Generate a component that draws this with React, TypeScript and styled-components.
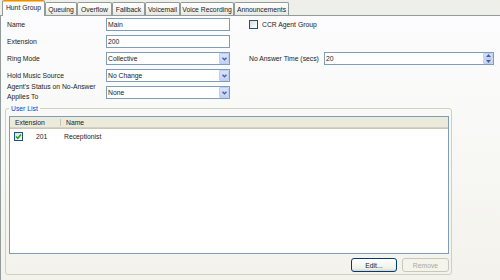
import React from "react";
import styled, { createGlobalStyle, css } from "styled-components";

const GlobalStyle = createGlobalStyle`
  html, body {
    margin: 0;
    padding: 0;
    background: #efefea;
  }
  body {
    font-family: "Liberation Sans", Arial, sans-serif;
    font-size: 6.8px;
    color: #1a1a1a;
  }
  * {
    box-sizing: border-box;
  }
`;

const tabs = [
  { label: "Hunt Group", width: 43 },
  { label: "Queuing", width: 32 },
  { label: "Overflow", width: 35 },
  { label: "Fallback", width: 33 },
  { label: "Voicemail", width: 35 },
  { label: "Voice Recording", width: 54 },
  { label: "Announcements", width: 55 },
];

const Chevron = () => (
  <svg width="5" height="4" viewBox="0 0 5 4">
    <polyline points="0.5,0.8 2.5,2.8 4.5,0.8" fill="none" stroke="#4d6185" strokeWidth="1.3" />
  </svg>
);

const App = () => {
  return (
    <>
      <GlobalStyle />
      <StyledWindow>
        <StyledTabStrip>
          {tabs.map((t, i) => (
            <StyledTab key={t.label} $active={i === 0} $width={t.width}>
              {t.label}
            </StyledTab>
          ))}
        </StyledTabStrip>
        <StyledPanel>
          <StyledForm>
            <StyledLabel>Name</StyledLabel>
            <StyledInput>Main</StyledInput>
            <span />
            <StyledCheckRow>
              <StyledCheckbox />
              <span>CCR Agent Group</span>
            </StyledCheckRow>

            <StyledLabel>Extension</StyledLabel>
            <StyledInput>200</StyledInput>
            <span />
            <span />
            <span />

            <StyledLabel>Ring Mode</StyledLabel>
            <StyledSelect>
              <span>Collective</span>
              <StyledDropButton>
                <Chevron />
              </StyledDropButton>
            </StyledSelect>
            <span />
            <StyledLabel>No Answer Time (secs)</StyledLabel>
            <StyledSelect>
              <span>20</span>
              <StyledSpinner>
                <StyledSpinHalf>
                  <svg width="5" height="3" viewBox="0 0 5 3">
                    <polygon points="0,3 2.5,0 5,3" fill="#4d6185" />
                  </svg>
                </StyledSpinHalf>
                <StyledSpinHalf>
                  <svg width="5" height="3" viewBox="0 0 5 3">
                    <polygon points="0,0 2.5,3 5,0" fill="#4d6185" />
                  </svg>
                </StyledSpinHalf>
              </StyledSpinner>
            </StyledSelect>

            <StyledLabel>Hold Music Source</StyledLabel>
            <StyledSelect>
              <span>No Change</span>
              <StyledDropButton>
                <Chevron />
              </StyledDropButton>
            </StyledSelect>
            <span />
            <span />
            <span />

            <StyledLabel $tall>
              Agent's Status on No-Answer
              <br />
              Applies To
            </StyledLabel>
            <StyledSelect>
              <span>None</span>
              <StyledDropButton>
                <Chevron />
              </StyledDropButton>
            </StyledSelect>
          </StyledForm>

          <StyledGroup>
            <StyledLegend>User List</StyledLegend>
            <StyledList>
              <StyledListHeader>
                <StyledHeaderCell $width={51}>Extension</StyledHeaderCell>
                <StyledHeaderCell>Name</StyledHeaderCell>
              </StyledListHeader>
              <StyledListRow>
                <StyledCell $width={51}>
                  <StyledCheckbox $checked>
                    <svg width="7" height="7" viewBox="0 0 7 7">
                      <polyline points="1,3.5 2.8,5.3 6,1.5" fill="none" stroke="#21a121" strokeWidth="1.5" />
                    </svg>
                  </StyledCheckbox>
                  <StyledExt>201</StyledExt>
                </StyledCell>
                <StyledCell $pad={3}>Receptionist</StyledCell>
              </StyledListRow>
            </StyledList>
            <StyledButtonRow>
              <StyledButton>Edit...</StyledButton>
              <StyledButton disabled $wide>
                Remove
              </StyledButton>
            </StyledButtonRow>
          </StyledGroup>
        </StyledPanel>
      </StyledWindow>
    </>
  );
};

const StyledWindow = styled.div`
  width: 500px;
  height: 280px;
  display: flex;
  flex-direction: column;
  overflow: hidden;
`;

const StyledTabStrip = styled.div`
  height: 15px;
  display: flex;
  align-items: flex-end;
  padding-left: 3px;
  position: relative;
  z-index: 1;
`;

const StyledTab = styled.div<{ $active?: boolean; $width: number }>`
  width: ${(p) => p.$width}px;
  height: 13px;
  display: flex;
  align-items: center;
  justify-content: center;
  white-space: nowrap;
  border: 1px solid #919b9c;
  border-bottom: none;
  border-radius: 2px 2px 0 0;
  background: linear-gradient(#ffffff, #f3f3ef 60%, #e8e7e1);
  ${(p) =>
    p.$active &&
    css`
      height: 16px;
      margin-bottom: -1px;
      margin-left: -1px;
      padding-bottom: 2px;
      background: #fcfcfe;
      border-top: 1px solid #e68b2c;
      box-shadow: inset 0 1px 0 #ffc83c;
    `}
`;

const StyledPanel = styled.div`
  flex: 1;
  display: flex;
  flex-direction: column;
  border-top: 1px solid #919b9c;
  border-left: 1px solid #919b9c;
  background: linear-gradient(#fcfcfe, #f7f7f3 60%, #f3f2ec);
  padding: 2px 6px 5px 6px;
  min-height: 0;
`;

const StyledForm = styled.div`
  display: grid;
  grid-template-columns: 99px 124px 19px 75px 170px;
  grid-template-rows: repeat(5, 13px);
  row-gap: 4px;
`;

const StyledLabel = styled.div<{ $tall?: boolean }>`
  display: flex;
  align-items: center;
  white-space: nowrap;
  ${(p) =>
    p.$tall &&
    css`
      display: block;
      line-height: 10px;
      margin-top: -4px;
      height: 20px;
    `}
`;

const StyledInput = styled.div`
  height: 13px;
  border: 1px solid #7f9db9;
  background: #fff;
  padding: 0 1px;
  display: flex;
  align-items: center;
`;

const StyledSelect = styled(StyledInput)`
  justify-content: space-between;
  padding: 0 0 0 1px;
`;

const StyledDropButton = styled.div`
  width: 10px;
  height: 11px;
  display: flex;
  align-items: center;
  justify-content: center;
  border: 1px solid #bccdf6;
  border-radius: 1px;
  background: linear-gradient(#d8e3fd, #c1d2fa);
`;

const StyledSpinner = styled.div`
  width: 10px;
  height: 11px;
  display: flex;
  flex-direction: column;
`;

const StyledSpinHalf = styled.div`
  flex: 1;
  display: flex;
  align-items: center;
  justify-content: center;
  border: 1px solid #bccdf6;
  border-radius: 1px;
  background: linear-gradient(#d8e3fd, #c1d2fa);
`;

const StyledCheckRow = styled.div`
  grid-column: 4 / 6;
  display: flex;
  align-items: center;
  gap: 4px;
`;

const StyledCheckbox = styled.div<{ $checked?: boolean }>`
  width: 9px;
  height: 9px;
  flex-shrink: 0;
  border: 1px solid #1c5180;
  background: linear-gradient(135deg, #dcdcd7, #ffffff);
  display: flex;
  align-items: center;
  justify-content: center;
`;

const StyledGroup = styled.fieldset`
  flex: 1;
  width: 447px;
  margin: 5px 0 0 -2px;
  border: 1px solid #d0d0bf;
  border-radius: 3px;
  padding: 3px 2px 2px 3px;
  display: flex;
  flex-direction: column;
  min-height: 0;
`;

const StyledLegend = styled.legend`
  color: #0046d5;
  padding: 0 2px;
  line-height: 9px;
`;

const StyledList = styled.div`
  flex: 1;
  border: 1px solid #7f9db9;
  background: #fff;
  display: flex;
  flex-direction: column;
`;

const StyledListHeader = styled.div`
  height: 12px;
  display: flex;
  background: #ebeadb;
  box-shadow: inset 0 -1px #cbc7b8, inset 0 -2px #d6d2c2;
`;

const StyledHeaderCell = styled.div<{ $width?: number }>`
  ${(p) => (p.$width ? `width: ${p.$width}px;` : "flex: 1;")}
  display: flex;
  align-items: center;
  padding-left: 5px;
  padding-bottom: 1px;
  position: relative;
  ${(p) =>
    p.$width &&
    css`
      &::after {
        content: "";
        position: absolute;
        right: 0;
        top: 2px;
        bottom: 3px;
        width: 1px;
        background: #c7c5b2;
      }
    `}
`;

const StyledListRow = styled.div`
  height: 10px;
  margin-top: 2px;
  display: flex;
`;

const StyledCell = styled.div<{ $width?: number; $pad?: number }>`
  ${(p) => (p.$width ? `width: ${p.$width}px;` : "flex: 1;")}
  display: flex;
  align-items: center;
  padding-left: ${(p) => (p.$pad ?? 4)}px;
`;

const StyledExt = styled.span`
  margin-left: 13px;
`;

const StyledButtonRow = styled.div`
  display: flex;
  justify-content: flex-end;
  gap: 5px;
  margin-top: 4px;
`;

const StyledButton = styled.button<{ $wide?: boolean }>`
  width: ${(p) => (p.$wide ? 47 : 46)}px;
  height: 14px;
  padding: 0;
  font-family: inherit;
  font-size: 6.8px;
  color: #1a1a1a;
  border: 1px solid #003c74;
  border-radius: 3px;
  background: linear-gradient(#ffffff, #f0f0ea 80%, #d8d4c8);
  &:disabled {
    color: #aca899;
    border-color: #c9c7ba;
    background: #f5f4ea;
  }
`;

export default App;
